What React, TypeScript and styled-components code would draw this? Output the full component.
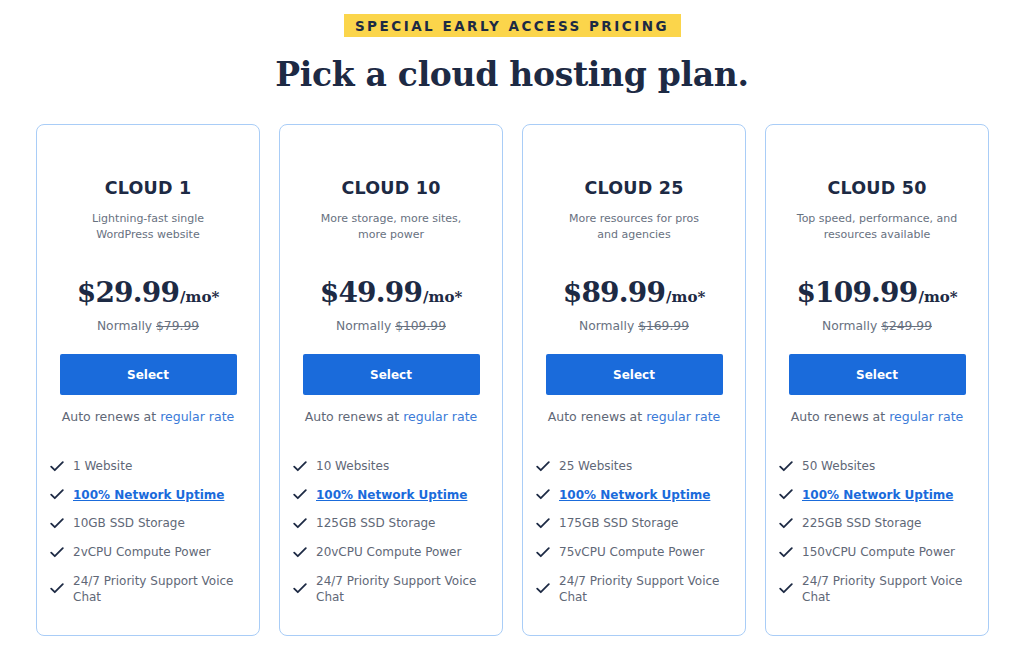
import React from "react";
import styled, { createGlobalStyle } from "styled-components";

const Global = createGlobalStyle`
  html, body { margin: 0; padding: 0; background: #fff; }
  body { font-family: "DejaVu Sans", "Noto Sans", sans-serif; color: #1d2a44; }
`;

const Page = styled.div`
  width: 1024px;
  display: flex;
  flex-direction: column;
  align-items: center;
  padding-top: 14px;
`;

const Badge = styled.div`
  background: #fbd54b;
  height: 23px;
  width: 337px;
  display: flex;
  align-items: center;
  justify-content: center;
  font-family: "DejaVu Sans", sans-serif;
  font-size: 13.5px;
  font-weight: 600;
  letter-spacing: 2.5px;
  color: #1d2a44;
`;

const Heading = styled.h1`
  margin: 16px 0 0;
  font-family: "DejaVu Serif", "Liberation Serif", serif;
  font-weight: 700;
  font-size: 33px;
  line-height: 44px;
  letter-spacing: -0.3px;
  color: #1d2a44;
`;

const Grid = styled.div`
  margin-top: 27px;
  display: grid;
  grid-template-columns: repeat(4, 224px);
  gap: 19px;
  margin-left: 1px;
`;

const Card = styled.div`
  box-sizing: border-box;
  height: 512px;
  border: 1px solid #a9cdf7;
  border-radius: 8px;
  display: flex;
  flex-direction: column;
  align-items: center;
  padding-top: 51px;
`;

const Title = styled.div`
  font-size: 17.5px;
  font-weight: 600;
  line-height: 24px;
  letter-spacing: 0.2px;
  color: #1d2a44;
`;

const Desc = styled.div`
  margin-top: 11px;
  font-size: 11px;
  line-height: 16px;
  color: #68717f;
  text-align: center;
  height: 32px;
`;

const DescLine = styled.div`
  white-space: nowrap;
`;

const PriceRow = styled.div`
  margin-top: 32px;
  display: flex;
  align-items: baseline;
  font-family: "DejaVu Serif", "Liberation Serif", serif;
  font-weight: 700;
  color: #1d2a44;
`;

const Amount = styled.span`
  font-size: 28px;
  line-height: 36px;
  letter-spacing: -0.8px;
`;

const Per = styled.span`
  font-size: 15px;
  margin-left: 1px;
`;

const Normally = styled.div`
  margin-top: 6px;
  font-size: 12.3px;
  line-height: 18px;
  color: #68717f;
`;

const Strike = styled.span`
  text-decoration: line-through;
`;

const SelectButton = styled.button`
  margin-top: 19px;
  width: 177px;
  height: 41px;
  border: none;
  border-radius: 2px;
  background: #1a6bdb;
  color: #fff;
  font-family: "DejaVu Sans", sans-serif;
  font-size: 12px;
  font-weight: 700;
  cursor: pointer;
`;

const Renew = styled.div`
  margin-top: 13px;
  font-size: 12.5px;
  line-height: 18px;
  color: #5f6877;
`;

const RenewLink = styled.span`
  color: #3a7ad8;
`;

const Features = styled.ul`
  list-style: none;
  margin: 32px 0 0;
  padding: 0 0 0 13px;
  align-self: stretch;
  display: flex;
  flex-direction: column;
  gap: 12.7px;
`;

const Feature = styled.li`
  display: flex;
  align-items: center;
  gap: 9px;
  font-size: 12px;
  line-height: 16px;
  color: #5f6877;
  padding-right: 14px;
`;

const FeatureLink = styled.a`
  color: #1a6bdb;
  font-weight: 700;
  text-decoration: underline;
`;

const Check = () => (
  <svg width="14" height="11" viewBox="0 0 14 11" fill="none" style={{ flexShrink: 0 }}>
    <path d="M1.2 5.6 L4.8 9.2 L12.8 1.2" stroke="#1d2a44" strokeWidth="1.8" strokeLinecap="round" strokeLinejoin="round" />
  </svg>
);

const plans = [
  { name: "CLOUD 1", desc: ["Lightning-fast single", "WordPress website"], price: "$29.99", was: "$79.99", sites: "1 Website", ssd: "10GB", cpu: "2vCPU" },
  { name: "CLOUD 10", desc: ["More storage, more sites,", "more power"], price: "$49.99", was: "$109.99", sites: "10 Websites", ssd: "125GB", cpu: "20vCPU" },
  { name: "CLOUD 25", desc: ["More resources for pros", "and agencies"], price: "$89.99", was: "$169.99", sites: "25 Websites", ssd: "175GB", cpu: "75vCPU" },
  { name: "CLOUD 50", desc: ["Top speed, performance, and", "resources available"], price: "$109.99", was: "$249.99", sites: "50 Websites", ssd: "225GB", cpu: "150vCPU" },
];

export default function App() {
  return (
    <>
      <Global />
      <Page>
        <Badge>SPECIAL EARLY ACCESS PRICING</Badge>
        <Heading>Pick a cloud hosting plan.</Heading>
        <Grid>
          {plans.map((p) => (
            <Card key={p.name}>
              <Title>{p.name}</Title>
              <Desc>
                {p.desc.map((l) => (
                  <DescLine key={l}>{l}</DescLine>
                ))}
              </Desc>
              <PriceRow>
                <Amount>{p.price}</Amount>
                <Per>/mo*</Per>
              </PriceRow>
              <Normally>
                Normally <Strike>{p.was}</Strike>
              </Normally>
              <SelectButton>Select</SelectButton>
              <Renew>
                Auto renews at <RenewLink>regular rate</RenewLink>
              </Renew>
              <Features>
                <Feature><Check />{p.sites}</Feature>
                <Feature><Check /><FeatureLink href="#">100% Network Uptime</FeatureLink></Feature>
                <Feature><Check />{p.ssd} SSD Storage</Feature>
                <Feature><Check />{p.cpu} Compute Power</Feature>
                <Feature><Check />24/7 Priority Support Voice Chat</Feature>
              </Features>
            </Card>
          ))}
        </Grid>
      </Page>
    </>
  );
}
